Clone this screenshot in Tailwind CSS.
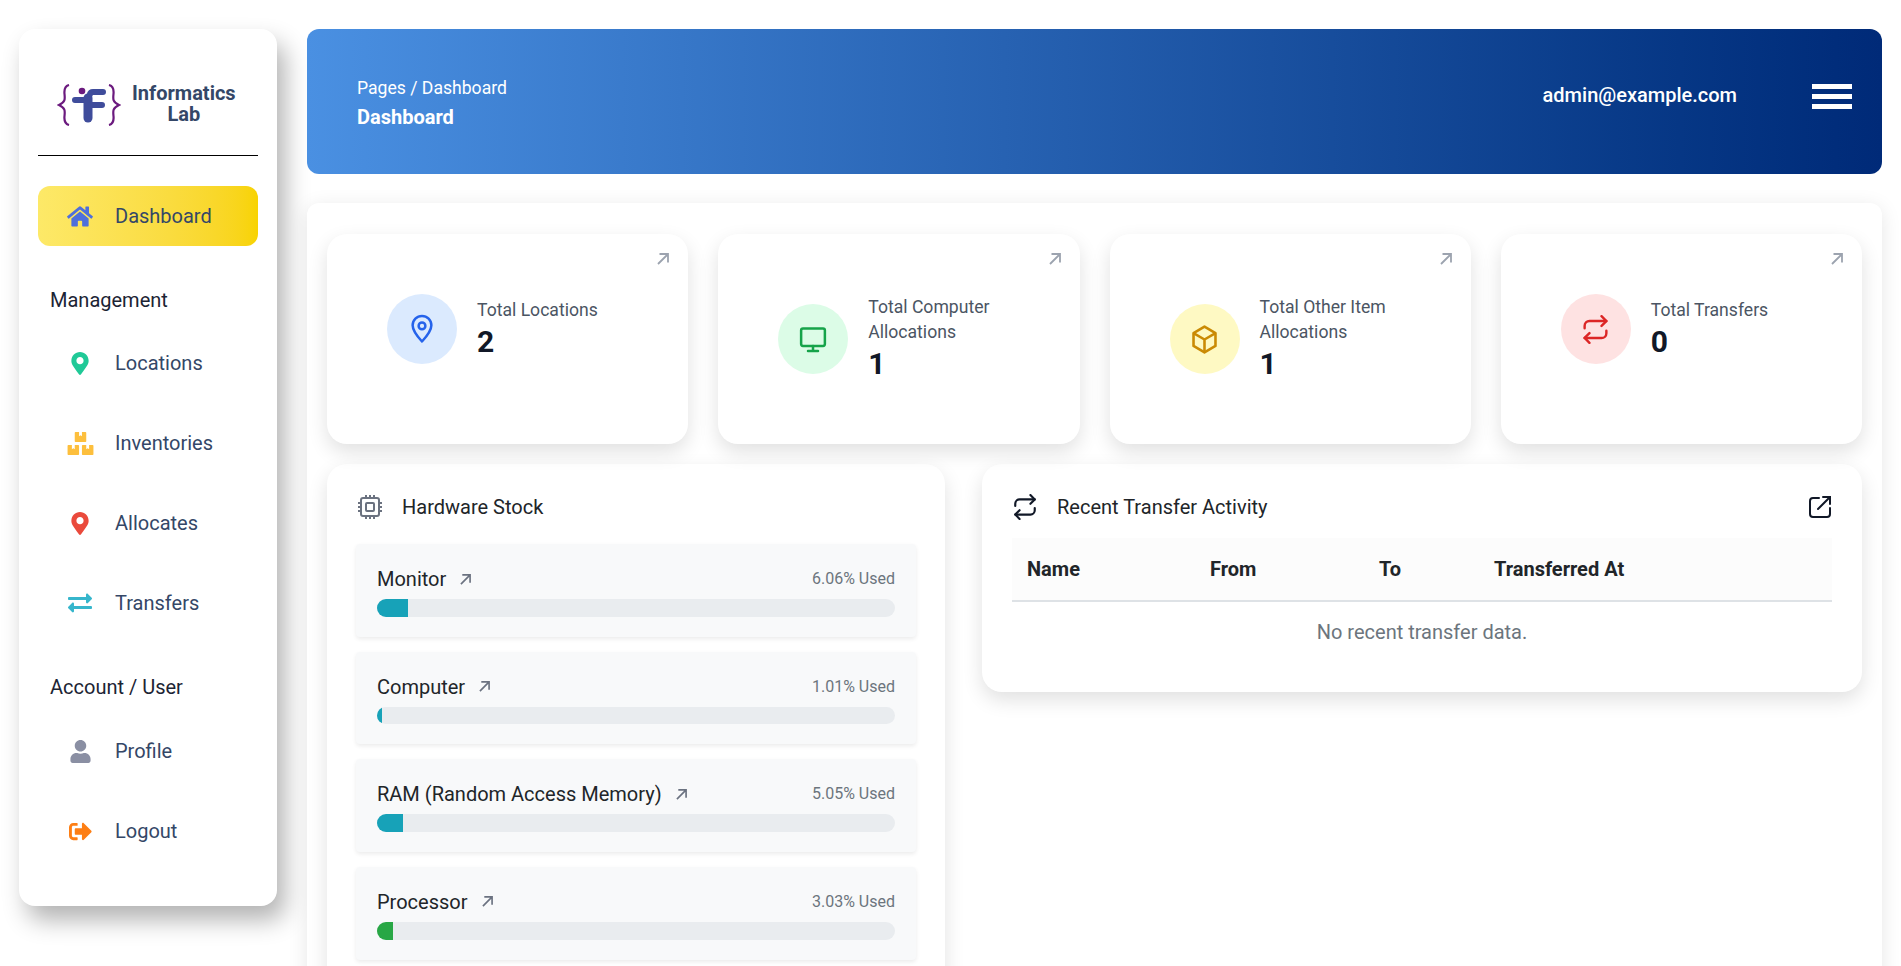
<!DOCTYPE html>
<html lang="en">
<head>
  <meta charset="UTF-8" />
  <meta name="viewport" content="width=device-width, initial-scale=1.0"/>
  <title>Informatics Lab — Dashboard</title>
  <script src="https://cdn.jsdelivr.net/npm/@tailwindcss/browser@4"></script>
</head>
<body class="bg-white h-screen overflow-hidden flex items-start font-['Roboto',sans-serif]">

  <!-- Sidebar -->
  <aside class="ml-[19px] mt-[29px] w-[258px] h-[877px] shrink-0 bg-white rounded-2xl shadow-[8px_14px_25px_rgba(0,0,0,0.3)] px-[19px]">
    <div class="h-[127px] border-b border-black flex items-end pb-[29px] pl-[19px] gap-[11px]">
      <svg class="w-[64px] h-[42px] shrink-0" viewBox="0 0 64 42" fill="none">
        <path d="M12 1C8 2 7 5 7.500 10s1 8-5.500 11c6.500 3 6 6 5.500 11s.5 8 4.500 9" stroke="#6b1a7e" stroke-width="2.200"/>
        <path d="M52 1c4 1 5 4 4.500 9s-1 8 5.500 11c-6.500 3-6 6-5.500 11s-.5 8-4.500 9" stroke="#6b1a7e" stroke-width="2.200"/>
        <circle cx="25" cy="7" r="3.300" fill="#6b1a7e"/>
        <path d="M31 34V14" stroke="#3f4c9b" stroke-width="9" stroke-linecap="round"/>
        <path d="M33 10c0-1 1-2 3-2h10M18 16h12M34 21h11" stroke="#3f4c9b" stroke-width="6" stroke-linecap="round"/>
      </svg>
      <div class="mb-[1px] text-[20px] leading-[21px] font-bold text-[#344767] text-center">Informatics<br>Lab</div>
    </div>

    <nav class="text-[20px] text-[#344767]">
      <a class="mt-[30px] h-[60px] rounded-xl bg-linear-to-r from-[#fde968] to-[#f8d300] flex items-center">
        <span class="w-[77px] flex justify-center pl-[7px]">
          <svg class="w-[26px] h-[23px]" viewBox="0 0 576 512" fill="#4e6fdc"><path d="M280.37 148.26L96 300.11V464a16 16 0 0 0 16 16l112.06-.29a16 16 0 0 0 15.92-16V368a16 16 0 0 1 16-16h64a16 16 0 0 1 16 16v95.64a16 16 0 0 0 16 16.05L464 480a16 16 0 0 0 16-16V300L295.67 148.26a12.19 12.19 0 0 0-15.3 0zM571.6 251.47L488 182.56V44.05a12 12 0 0 0-12-12h-56a12 12 0 0 0-12 12v72.61L318.47 43a48 48 0 0 0-61 0L4.34 251.47a12 12 0 0 0-1.6 16.9l25.5 31A12 12 0 0 0 45.15 301l235.22-193.74a12.19 12.19 0 0 1 15.3 0L530.9 301a12 12 0 0 0 16.9-1.6l25.5-31a12 12 0 0 0-1.7-16.93z"/></svg>
        </span>
        Dashboard
      </a>

      <div class="mt-[42px] pl-[12px] h-[24px] leading-[24px] text-[#1c2434]">Management</div>
      <a class="mt-[11px] h-[80px] flex items-center">
        <span class="w-[77px] flex justify-center pl-[7px]">
          <svg class="w-[18px] h-[23px]" viewBox="0 0 384 512" fill="#20c997"><path d="M172.268 501.67C26.97 291.031 0 269.413 0 192 0 85.961 85.961 0 192 0s192 85.961 192 192c0 77.413-26.97 99.031-172.268 309.67-9.535 13.774-29.93 13.773-39.464 0zM192 272c44.183 0 80-35.817 80-80s-35.817-80-80-80-80 35.817-80 80 35.817 80 80 80z"/></svg>
        </span>
        Locations
      </a>
      <a class="h-[80px] flex items-center">
        <span class="w-[77px] flex justify-center pl-[7px]">
          <svg class="w-[27px] h-[23px]" viewBox="0 0 576 512" fill="#fdbf3d"><path d="M560 288h-80v96l-32-21.300-32 21.300v-96h-80c-8.800 0-16 7.200-16 16v192c0 8.800 7.200 16 16 16h224c8.800 0 16-7.200 16-16V304c0-8.800-7.200-16-16-16zm-384-64h224c8.800 0 16-7.200 16-16V16c0-8.800-7.200-16-16-16h-80v96l-32-21.300L256 96V0h-80c-8.800 0-16 7.200-16 16v192c0 8.800 7.200 16 16 16zm64 64h-80v96l-32-21.300L96 384v-96H16c-8.800 0-16 7.200-16 16v192c0 8.800 7.200 16 16 16h224c8.800 0 16-7.200 16-16V304c0-8.800-7.200-16-16-16z"/></svg>
        </span>
        Inventories
      </a>
      <a class="h-[80px] flex items-center">
        <span class="w-[77px] flex justify-center pl-[7px]">
          <svg class="w-[18px] h-[23px]" viewBox="0 0 384 512" fill="#ea4a3c"><path d="M172.268 501.67C26.97 291.031 0 269.413 0 192 0 85.961 85.961 0 192 0s192 85.961 192 192c0 77.413-26.97 99.031-172.268 309.67-9.535 13.774-29.93 13.773-39.464 0zM192 272c44.183 0 80-35.817 80-80s-35.817-80-80-80-80 35.817-80 80 35.817 80 80 80z"/></svg>
        </span>
        Allocates
      </a>
      <a class="h-[80px] flex items-center">
        <span class="w-[77px] flex justify-center pl-[7px]">
          <svg class="w-[24px] h-[24px]" viewBox="0 0 512 512" fill="#36b6cc"><path d="M0 168v-16c0-13.255 10.745-24 24-24h360V80c0-21.367 25.899-32.042 40.971-16.971l80 80c9.372 9.373 9.372 24.569 0 33.941l-80 80C409.956 271.982 384 261.456 384 240v-48H24c-13.255 0-24-10.745-24-24zm488 152H128v-48c0-21.314-25.862-32.080-40.971-16.971l-80 80c-9.372 9.373-9.372 24.569 0 33.941l80 80C102.057 463.997 128 453.437 128 432v-48h360c13.255 0 24-10.745 24-24v-16c0-13.255-10.745-24-24-24z"/></svg>
        </span>
        Transfers
      </a>

      <div class="mt-[32px] pl-[12px] h-[24px] leading-[24px] text-[#1c2434]">Account / User</div>
      <a class="mt-[12px] h-[80px] flex items-center">
        <span class="w-[77px] flex justify-center pl-[7px]">
          <svg class="w-[21px] h-[23px]" viewBox="0 0 448 512" fill="#8a8fa3"><path d="M224 256c70.700 0 128-57.300 128-128S294.700 0 224 0 96 57.300 96 128s57.300 128 128 128zm89.600 32h-16.700c-22.200 10.200-46.900 16-72.900 16s-50.600-5.800-72.900-16h-16.700C60.200 288 0 348.200 0 422.400V464c0 26.500 21.500 48 48 48h352c26.500 0 48-21.500 48-48v-41.600c0-74.200-60.200-134.400-134.400-134.400z"/></svg>
        </span>
        Profile
      </a>
      <a class="h-[80px] flex items-center">
        <span class="w-[77px] flex justify-center pl-[7px]">
          <svg class="w-[23px] h-[23px]" viewBox="0 0 512 512" fill="#fd7e14"><path d="M497 273L329 441c-15 15-41 4.500-41-17v-96H152c-13.300 0-24-10.700-24-24v-96c0-13.300 10.700-24 24-24h136V88c0-21.400 25.900-32 41-17l168 168c9.300 9.400 9.300 24.600 0 34zM192 436v-40c0-6.600-5.400-12-12-12H96c-17.700 0-32-14.300-32-32V160c0-17.700 14.300-32 32-32h84c6.600 0 12-5.400 12-12V76c0-6.600-5.400-12-12-12H96c-53 0-96 43-96 96v192c0 53 43 96 96 96h84c6.600 0 12-5.400 12-12z"/></svg>
        </span>
        Logout
      </a>
    </nav>
  </aside>

  <main class="ml-[30px] mr-[19px] mt-[29px] flex-1 min-w-0">
    <!-- Header -->
    <header class="h-[145px] rounded-xl bg-linear-to-r from-[#4a90e2] to-[#002a78] flex items-center pl-[50px] pr-[30px] text-white">
      <div class="pt-[2px]">
        <div class="text-[17.600px] leading-[24px]">Pages / Dashboard</div>
        <div class="mt-[5px] text-[20px] leading-[24px] font-bold">Dashboard</div>
      </div>
      <div class="ml-auto pb-[13px] text-[20px] font-medium">admin@example.com</div>
      <div class="ml-[75px] w-[40px] flex flex-col gap-[5px] pb-[10px]">
        <span class="h-[5px] bg-white"></span>
        <span class="h-[5px] bg-white"></span>
        <span class="h-[5px] bg-white"></span>
      </div>
    </header>

    <!-- Panel -->
    <section class="mt-[29px] rounded-xl bg-white shadow-[0_4px_20px_rgba(0,0,0,0.1)] px-[20px] pt-[31px] pb-[40px]">
      <div class="grid grid-cols-4 gap-[30px]">
        <div class="relative h-[210px] rounded-[20px] bg-white shadow-[0_8px_20px_rgba(0,0,0,0.12)] pl-[60px] pr-[20px] pt-[60px]">
          <svg class="absolute right-[19px] top-[19px] w-[12px] h-[12px]" viewBox="0 0 12 12" fill="none" stroke="#9ca3af" stroke-width="1.800"><path d="M1 11L11 1M2.500 1H11v8.500"/></svg>
          <div class="flex items-center gap-[20px]">
            <span class="w-[70px] h-[70px] shrink-0 rounded-full bg-[#dbeafe] flex items-center justify-center">
              <svg class="w-[30px] h-[30px]" viewBox="0 0 24 24" fill="none" stroke="#2563eb" stroke-width="2" stroke-linecap="round" stroke-linejoin="round"><path d="M12 22s-7.500-8.200-7.500-13a7.500 7.500 0 0 1 15 0c0 4.800-7.500 13-7.500 13z"/><circle cx="12" cy="9.500" r="2.700"/></svg>
            </span>
            <div>
              <div class="text-[17.600px] leading-[25px] text-[#4b5563]">Total Locations</div>
              <div class="text-[30px] leading-[38px] font-bold text-[#111827]">2</div>
            </div>
          </div>
        </div>
        <div class="relative h-[210px] rounded-[20px] bg-white shadow-[0_8px_20px_rgba(0,0,0,0.12)] pl-[60px] pr-[20px] pt-[61px]">
          <svg class="absolute right-[19px] top-[19px] w-[12px] h-[12px]" viewBox="0 0 12 12" fill="none" stroke="#9ca3af" stroke-width="1.800"><path d="M1 11L11 1M2.500 1H11v8.500"/></svg>
          <div class="flex items-center gap-[20px]">
            <span class="w-[70px] h-[70px] shrink-0 rounded-full bg-[#dcfce7] flex items-center justify-center">
              <svg class="w-[30px] h-[30px]" viewBox="0 0 24 24" fill="none" stroke="#16a34a" stroke-width="2" stroke-linecap="round" stroke-linejoin="round"><rect x="2.500" y="3.500" width="19" height="14" rx="1.500"/><path d="M12 17.500v4M8 21.500h8"/></svg>
            </span>
            <div>
              <div class="text-[17.600px] leading-[25px] text-[#4b5563]">Total Computer Allocations</div>
              <div class="text-[30px] leading-[38px] font-bold text-[#111827]">1</div>
            </div>
          </div>
        </div>
        <div class="relative h-[210px] rounded-[20px] bg-white shadow-[0_8px_20px_rgba(0,0,0,0.12)] pl-[60px] pr-[20px] pt-[61px]">
          <svg class="absolute right-[19px] top-[19px] w-[12px] h-[12px]" viewBox="0 0 12 12" fill="none" stroke="#9ca3af" stroke-width="1.800"><path d="M1 11L11 1M2.500 1H11v8.500"/></svg>
          <div class="flex items-center gap-[20px]">
            <span class="w-[70px] h-[70px] shrink-0 rounded-full bg-[#fef9c3] flex items-center justify-center">
              <svg class="w-[31px] h-[31px]" viewBox="0 0 24 24" fill="none" stroke="#ca8a04" stroke-width="2" stroke-linejoin="round"><path d="M12 2l8.500 5v10L12 22l-8.500-5V7z"/><path d="M3.500 7L12 12l8.500-5M12 12v10"/></svg>
            </span>
            <div>
              <div class="text-[17.600px] leading-[25px] text-[#4b5563]">Total Other Item Allocations</div>
              <div class="text-[30px] leading-[38px] font-bold text-[#111827]">1</div>
            </div>
          </div>
        </div>
        <div class="relative h-[210px] rounded-[20px] bg-white shadow-[0_8px_20px_rgba(0,0,0,0.12)] pl-[60px] pr-[20px] pt-[60px]">
          <svg class="absolute right-[19px] top-[19px] w-[12px] h-[12px]" viewBox="0 0 12 12" fill="none" stroke="#9ca3af" stroke-width="1.800"><path d="M1 11L11 1M2.500 1H11v8.500"/></svg>
          <div class="flex items-center gap-[20px]">
            <span class="w-[70px] h-[70px] shrink-0 rounded-full bg-[#fee2e2] flex items-center justify-center">
              <svg class="w-[29px] h-[29px]" viewBox="0 0 24 24" fill="none" stroke="#dc2626" stroke-width="2" stroke-linecap="round" stroke-linejoin="round"><path d="M17 1l4 4-4 4"/><path d="M3 11V9a4 4 0 0 1 4-4h14"/><path d="M7 23l-4-4 4-4"/><path d="M21 13v2a4 4 0 0 1-4 4H3"/></svg>
            </span>
            <div>
              <div class="text-[17.600px] leading-[25px] text-[#4b5563]">Total Transfers</div>
              <div class="text-[30px] leading-[38px] font-bold text-[#111827]">0</div>
            </div>
          </div>
        </div>
      </div>

      <div class="mt-[20px] flex items-start gap-[37px]">
        <!-- Hardware stock -->
        <div class="w-[618px] shrink-0 rounded-[20px] bg-white shadow-[0_8px_20px_rgba(0,0,0,0.12)] px-[29px] pt-[31px] pb-[30px]">
          <div class="flex items-center h-[24px]">
            <svg class="w-[24px] h-[24px] ml-[2px]" viewBox="0 0 24 24" fill="none" stroke="#6b7280" stroke-width="2"><rect x="3" y="3" width="18" height="18" rx="2"/><rect x="8" y="8" width="8" height="8" rx="1"/><path d="M8 0v3M12 0v3M16 0v3M8 21v3M12 21v3M16 21v3M0 8h3M0 12h3M0 16h3M21 8h3M21 12h3M21 16h3"/></svg>
            <span class="ml-[20px] text-[20px] text-[#212529]">Hardware Stock</span>
          </div>
          <div class="mt-[25px] flex flex-col gap-[15px]">
            <div class="h-[92.670px] rounded bg-[#f8f9fa] shadow-[0_2px_4px_rgba(0,0,0,0.08)] px-[21px] pt-[20px]">
              <div class="flex items-center justify-between h-[30px]">
                <span class="flex items-center text-[20px] text-[#212529]">Monitor
                  <svg class="ml-[14px] w-[11px] h-[11px]" viewBox="0 0 12 12" fill="none" stroke="#6b7280" stroke-width="1.800"><path d="M1 11L11 1M2.500 1H11v8.500"/></svg>
                </span>
                <span class="text-[16px] text-[#6c757d]">6.06% Used</span>
              </div>
              <div class="mt-[5px] h-[17.600px] rounded-full bg-[#e9ecef] overflow-hidden"><div class="h-full bg-[#17a2b8]" style="width:6.06%"></div></div>
            </div>
            <div class="h-[92.670px] rounded bg-[#f8f9fa] shadow-[0_2px_4px_rgba(0,0,0,0.08)] px-[21px] pt-[20px]">
              <div class="flex items-center justify-between h-[30px]">
                <span class="flex items-center text-[20px] text-[#212529]">Computer
                  <svg class="ml-[14px] w-[11px] h-[11px]" viewBox="0 0 12 12" fill="none" stroke="#6b7280" stroke-width="1.800"><path d="M1 11L11 1M2.500 1H11v8.500"/></svg>
                </span>
                <span class="text-[16px] text-[#6c757d]">1.01% Used</span>
              </div>
              <div class="mt-[5px] h-[17.600px] rounded-full bg-[#e9ecef] overflow-hidden"><div class="h-full bg-[#17a2b8]" style="width:1.01%"></div></div>
            </div>
            <div class="h-[92.670px] rounded bg-[#f8f9fa] shadow-[0_2px_4px_rgba(0,0,0,0.08)] px-[21px] pt-[20px]">
              <div class="flex items-center justify-between h-[30px]">
                <span class="flex items-center text-[20px] text-[#212529]">RAM (Random Access Memory)
                  <svg class="ml-[14px] w-[11px] h-[11px]" viewBox="0 0 12 12" fill="none" stroke="#6b7280" stroke-width="1.800"><path d="M1 11L11 1M2.500 1H11v8.500"/></svg>
                </span>
                <span class="text-[16px] text-[#6c757d]">5.05% Used</span>
              </div>
              <div class="mt-[5px] h-[17.600px] rounded-full bg-[#e9ecef] overflow-hidden"><div class="h-full bg-[#17a2b8]" style="width:5.05%"></div></div>
            </div>
            <div class="h-[92.670px] rounded bg-[#f8f9fa] shadow-[0_2px_4px_rgba(0,0,0,0.08)] px-[21px] pt-[20px]">
              <div class="flex items-center justify-between h-[30px]">
                <span class="flex items-center text-[20px] text-[#212529]">Processor
                  <svg class="ml-[14px] w-[11px] h-[11px]" viewBox="0 0 12 12" fill="none" stroke="#6b7280" stroke-width="1.800"><path d="M1 11L11 1M2.500 1H11v8.500"/></svg>
                </span>
                <span class="text-[16px] text-[#6c757d]">3.03% Used</span>
              </div>
              <div class="mt-[5px] h-[17.600px] rounded-full bg-[#e9ecef] overflow-hidden"><div class="h-full bg-[#28a745]" style="width:3.03%"></div></div>
            </div>
          </div>
        </div>

        <!-- Recent transfers -->
        <div class="flex-1 min-w-0 h-[228px] rounded-[20px] bg-white shadow-[0_8px_20px_rgba(0,0,0,0.12)] pl-[30px] pr-[30px] pt-[31px]">
          <div class="flex items-center h-[24px]">
            <svg class="w-[26px] h-[26px]" viewBox="0 0 24 24" fill="none" stroke="#111827" stroke-width="2" stroke-linecap="round" stroke-linejoin="round"><path d="M17 1l4 4-4 4"/><path d="M3 11V9a4 4 0 0 1 4-4h14"/><path d="M7 23l-4-4 4-4"/><path d="M21 13v2a4 4 0 0 1-4 4H3"/></svg>
            <span class="ml-[19px] text-[20px] text-[#212529]">Recent Transfer Activity</span>
            <svg class="ml-auto mr-[1px] w-[22px] h-[22px]" viewBox="0 0 22 22" fill="none" stroke="#111827" stroke-width="2" stroke-linecap="round"><path d="M10 2H4a3 3 0 0 0-3 3v13a3 3 0 0 0 3 3h14a3 3 0 0 0 3-3v-6"/><path d="M9 13L21 1M14 1h7v7"/></svg>
          </div>
          <table class="mt-[19px] w-full table-fixed">
            <thead>
              <tr class="h-[63px] bg-[#fcfcfc] border-b-2 border-[#dee2e6] text-left text-[20px] font-bold text-[#212529]">
                <th class="w-[183px] pl-[15px]">Name</th>
                <th class="w-[168px] pl-[15px]">From</th>
                <th class="w-[115px] pl-[16px]">To</th>
                <th class="pl-[16px]">Transferred At</th>
              </tr>
            </thead>
            <tbody>
              <tr class="h-[60px]"><td colspan="4" class="text-center text-[20px] text-[#6c757d]">No recent transfer data.</td></tr>
            </tbody>
          </table>
        </div>
      </div>
    </section>
  </main>

</body>
</html>
